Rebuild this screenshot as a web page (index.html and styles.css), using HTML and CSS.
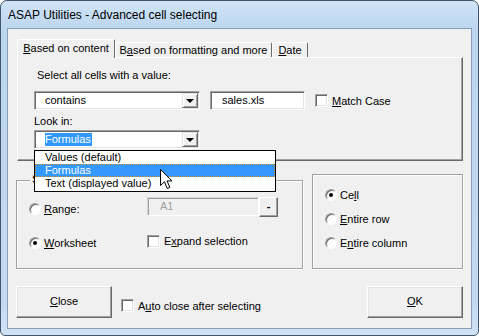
FILE: index.html
```html
<!DOCTYPE html>
<html lang="en">
<head>
    <meta charset="UTF-8">
    <title>ASAP Utilities - Advanced cell selecting</title>
    <link rel="stylesheet" href="styles.css">
</head>
<body>
    <div class="window">
        <div class="titlebar">ASAP Utilities - Advanced cell selecting</div>

        <div class="client">
            <div class="tabs">
                <div class="tab active"><u>B</u>ased on content</div>
                <div class="tab wide">B<u>a</u>sed on formatting and more</div>
                <div class="tab narrow"><u>D</u>ate</div>
            </div>

            <div class="panel">
                <div class="label first">Select all cells with a value:</div>
                <div class="row">
                    <div class="combo">
                        <span class="combo-text">contains</span>
                        <span class="drop-btn"></span>
                    </div>
                    <div class="textbox">sales.xls</div>
                    <div class="check">
                        <span class="box"></span>
                        <span><u>M</u>atch Case</span>
                    </div>
                </div>
                <div class="label look">Look in:</div>
                <div class="combo-wrap">
                    <div class="combo">
                        <span class="combo-text"><span class="selected-text">Formulas</span></span>
                        <span class="drop-btn"></span>
                    </div>
                    <!-- open dropdown list -->
                    <ul class="droplist">
                        <li>Values (default)</li>
                        <li class="hot">Formulas</li>
                        <li>Text (displayed value)</li>
                    </ul>
                </div>
            </div>

            <div class="groups">
                <div class="group scope">
                    <span class="caption">Search in</span>
                    <div class="scope-grid">
                        <div class="radio-row">
                            <span class="radio"></span>
                            <span><u>R</u>ange:</span>
                        </div>
                        <div class="range">
                            <div class="textbox disabled">A1</div>
                            <div class="small-btn">-</div>
                        </div>
                        <div class="radio-row">
                            <span class="radio on"></span>
                            <span><u>W</u>orksheet</span>
                        </div>
                        <div class="check">
                            <span class="box"></span>
                            <span>E<u>x</u>pand selection</span>
                        </div>
                    </div>
                </div>

                <div class="group extent">
                    <div class="radio-row">
                        <span class="radio on"></span>
                        <span>Ce<u>l</u>l</span>
                    </div>
                    <div class="radio-row">
                        <span class="radio"></span>
                        <span><u>E</u>ntire row</span>
                    </div>
                    <div class="radio-row">
                        <span class="radio"></span>
                        <span>E<u>n</u>tire column</span>
                    </div>
                </div>
            </div>

            <div class="footer">
                <div class="button"><u>C</u>lose</div>
                <div class="check auto">
                    <span class="box"></span>
                    <span>A<u>u</u>to close after selecting</span>
                </div>
                <div class="button ok"><u>O</u>K</div>
            </div>
        </div>

        <svg class="cursor" width="13" height="21" viewBox="0 0 13 21">
            <path d="M0.5 0.5 L0.5 16.5 L4.5 12.8 L7.2 19.5 L9.8 18.4 L7.1 11.9 L12 11.9 Z" fill="#fff" stroke="#000" stroke-width="1" stroke-linejoin="miter"/>
        </svg>
    </div>
</body>
</html>
```

FILE: styles.css
```css
* {
    box-sizing: border-box;
}
body {
    margin: 0;
    background-color: #ffffff;
    font-family: 'Liberation Sans', Arial, sans-serif;
    font-size: 11px;
    color: #000;
}
u {
    text-decoration: underline;
    text-underline-offset: 1px;
}
.window {
    position: relative;
    width: 479px;
    height: 336px;
    border: 1px solid #45566a;
    border-radius: 7px 7px 5px 5px;
    background: linear-gradient(#d0e4f7, #bcd6ef 28px, #c2daf1 300px, #cfe3f6);
    padding: 0 7px 7px 7px;
    display: flex;
    flex-direction: column;
}
.titlebar {
    height: 28px;
    line-height: 28px;
    font-family: 'Liberation Sans', Arial, sans-serif;
    font-size: 12px;
}
.client {
    flex: 1;
    background-color: #f0f0f0;
    box-shadow: 0 0 0 1px #8aa0b8;
    display: flex;
    flex-direction: column;
}

/* tabs */
.tabs {
    display: flex;
    align-items: flex-end;
    height: 18px;
    margin: 10px 0 0 9px;
    position: relative;
    z-index: 1;
}
.tab {
    width: 98px;
    height: 15px;
    line-height: 14px;
    text-align: center;
    border: 1px solid;
    border-color: #fff #696969 transparent #fff;
    border-bottom: none;
    border-radius: 2px 2px 0 0;
}
.tab.active {
    height: 19px;
    line-height: 16px;
    margin-bottom: -1px;
    background-color: #f0f0f0;
}
.tab.wide {
    width: 157px;
}
.tab.narrow {
    width: 36px;
}
.panel {
    margin: 0 8px 0 9px;
    height: 104px;
    border: 1px solid;
    border-color: #fff #696969 #696969 #fff;
    box-shadow: inset -1px -1px #a0a0a0;
    padding: 10px 0 0 16px;
}
.label {
    height: 14px;
    line-height: 14px;
}
.label.first {
    padding-left: 3px;
}
.label.look {
    margin-top: 4px;
}
.row {
    display: flex;
    align-items: center;
    margin-top: 9px;
}

/* sunken fields */
.combo, .textbox {
    height: 19px;
    background-color: #fff;
    border: 1px solid;
    border-color: #a0a0a0 #fff #fff #a0a0a0;
    box-shadow: inset 1px 1px #696969, inset -1px -1px #e3e3e3;
}
.combo {
    width: 166px;
    display: flex;
    align-items: center;
    padding: 1px 1px 1px 10px;
}
.combo-text {
    flex: 1;
    line-height: 15px;
}
.selected-text {
    background-color: #3399ff;
    color: #fff;
    padding: 0 1px 1px 0;
}
.drop-btn {
    position: relative;
    width: 16px;
    height: 15px;
    background-color: #f0f0f0;
    border: 1px solid;
    border-color: #e3e3e3 #696969 #696969 #e3e3e3;
    box-shadow: inset 1px 1px #fff, inset -1px -1px #a0a0a0;
}
.drop-btn::after {
    content: "";
    position: absolute;
    left: 3px;
    top: 5px;
    border-left: 4px solid transparent;
    border-right: 4px solid transparent;
    border-top: 4px solid #000;
}
.textbox {
    width: 95px;
    margin-left: 10px;
    padding-left: 11px;
    line-height: 17px;
}
.textbox.disabled {
    margin-left: 0;
    width: 112px;
    background-color: #f0f0f0;
    color: #a0a0a0;
    padding-left: 12px;
    border-color: #d4d4d4 #fff #fff #d4d4d4;
    box-shadow: inset 1px 1px #a0a0a0, inset -1px -1px #f0f0f0;
}
.check {
    display: flex;
    align-items: center;
    gap: 4px;
    margin-left: 10px;
}
.box {
    width: 13px;
    height: 13px;
    background-color: #fff;
    border: 1px solid;
    border-color: #a0a0a0 #fff #fff #a0a0a0;
    box-shadow: inset 1px 1px #696969, inset -1px -1px #e3e3e3;
}

/* open list */
.combo-wrap {
    position: relative;
    margin-top: 2px;
    width: 166px;
}
.droplist {
    position: absolute;
    z-index: 10;
    left: 0;
    top: 20px;
    width: 242px;
    margin: 0;
    padding: 0 0 1px 0;
    list-style: none;
    background-color: #fff;
    border: 1px solid #000;
}
.droplist li {
    height: 13px;
    line-height: 12px;
    padding-left: 10px;
}
.droplist li.hot {
    background-color: #3399ff;
    color: #fff;
    outline: 1px dotted #d08a2a;
    outline-offset: -1px;
}

/* group boxes */
.groups {
    display: flex;
    align-items: flex-start;
    margin: 13px 8px 0 8px;
    gap: 9px;
}
.group {
    position: relative;
    border: 1px solid #a0a0a0;
    box-shadow: inset 1px 1px #fff, 1px 1px #fff;
}
.group.scope {
    width: 287px;
    height: 89px;
    margin-top: 6px;
    padding: 16px 0 0 12px;
}
.caption {
    position: absolute;
    left: 13px;
    top: -8px;
    padding: 0 2px;
    background-color: #f0f0f0;
}
.scope-grid {
    display: grid;
    grid-template-columns: 118px auto;
    grid-auto-rows: 20px;
    row-gap: 14px;
    align-items: center;
}
.range {
    display: flex;
}
.small-btn {
    width: 19px;
    height: 20px;
    line-height: 16px;
    text-align: center;
    font-weight: bold;
    background-color: #f0f0f0;
    border: 1px solid;
    border-color: #fff #696969 #696969 #fff;
    box-shadow: inset -1px -1px #a0a0a0;
}
.scope-grid .check {
    margin-left: 0;
}
.group.extent {
    width: 151px;
    height: 95px;
    flex-shrink: 0;
    padding: 13px 0 0 12px;
    display: flex;
    flex-direction: column;
    gap: 10px;
}
.radio-row {
    display: flex;
    align-items: center;
    gap: 3px;
    height: 14px;
}
.scope-grid .radio-row {
    margin-top: 4px;
}
.radio {
    position: relative;
    width: 12px;
    height: 12px;
    border-radius: 50%;
    background-color: #fff;
    border: 1px solid;
    border-color: #a0a0a0 #fff #fff #a0a0a0;
    box-shadow: inset 1px 1px #696969;
}
.radio.on::after {
    content: "";
    position: absolute;
    left: 3px;
    top: 3px;
    width: 4px;
    height: 4px;
    border-radius: 50%;
    background-color: #000;
}

/* bottom buttons */
.footer {
    display: flex;
    align-items: flex-start;
    margin: 17px 8px 0 8px;
}
.button {
    width: 96px;
    height: 32px;
    line-height: 28px;
    text-align: center;
    background-color: #f0f0f0;
    border: 1px solid;
    border-color: #fff #696969 #696969 #fff;
    box-shadow: inset -1px -1px #a0a0a0, inset 1px 1px #e3e3e3;
}
.check.auto {
    margin-left: 9px;
    margin-top: 13px;
}
.button.ok {
    margin-left: auto;
}
.cursor {
    position: absolute;
    left: 159px;
    top: 168px;
    z-index: 20;
}
```
